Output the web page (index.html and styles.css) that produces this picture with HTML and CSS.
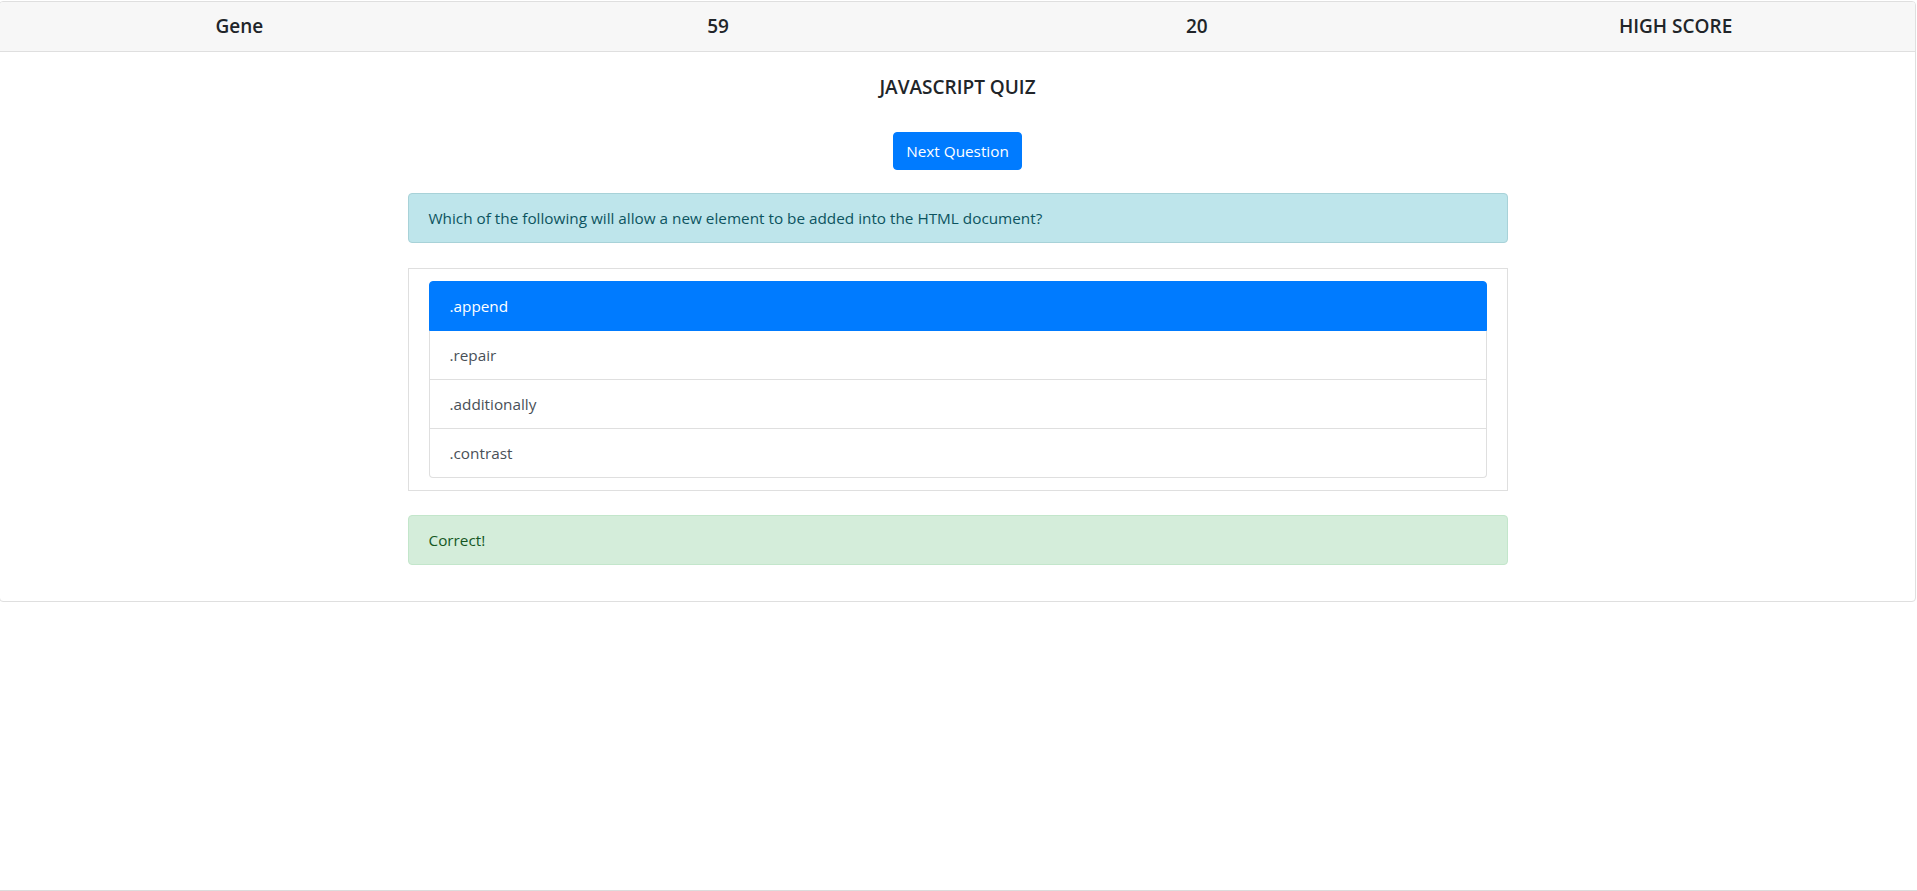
FILE: index.html
```html
<!DOCTYPE html>
<html lang="en">
<head>
<meta charset="utf-8">
<title>JavaScript Quiz</title>
<link rel="stylesheet" href="styles.css">
</head>
<body>
<div class="page">
  <div class="card">
    <div class="card-header">
      <div class="stats">
        <h5 class="stat">Gene</h5>
        <h5 class="stat">59</h5>
        <h5 class="stat">20</h5>
        <h5 class="stat">HIGH SCORE</h5>
      </div>
    </div>
    <div class="card-body">
      <h5 class="title">JAVASCRIPT QUIZ</h5>
      <div class="btn-row"><button class="btn" type="button">Next Question</button></div>
      <div class="quiz">
        <div class="alert alert-info">Which of the following will allow a new element to be added into the HTML document?</div>
        <div class="answers">
          <ul class="list">
            <li class="item active">.append</li>
            <li class="item">.repair</li>
            <li class="item">.additionally</li>
            <li class="item">.contrast</li>
          </ul>
        </div>
        <div class="alert alert-success">Correct!</div>
      </div>
    </div>
  </div>
</div>
</body>
</html>
```
FILE: styles.css
```css
* { box-sizing: border-box; }
html, body { margin: 0; padding: 0; }
body {
  font-family: "Open Sans", "Noto Sans", "Liberation Sans", sans-serif;
  font-size: 16px;
  line-height: 1.5;
  color: #212529;
  background: #fff;
}
.page {
  min-height: 100vh;
  border-bottom: 1px solid #dcdcdc;
  overflow: hidden;
}
.card {
  margin: 1px 1px 0 -1px;
  border: 1px solid #dfdfdf;
  border-radius: 4px;
  background: #fff;
}
.card-header {
  background: #f7f7f7;
  border-bottom: 1px solid #dfdfdf;
  border-radius: 3px 3px 0 0;
  padding: 12px 0 13px;
}
.stats {
  display: grid;
  grid-template-columns: repeat(4, 1fr);
}
.stat {
  margin: 0;
  font-size: 19px;
  font-weight: 600;
  line-height: 24px;
  text-align: center;
  color: #212529;
}
.card-body {
  padding: 20px 20px 36px;
}
.title {
  margin: 0 0 30px;
  font-size: 19px;
  font-weight: 600;
  line-height: 30px;
  text-align: center;
}
.btn-row {
  display: flex;
  justify-content: center;
  margin-bottom: 23px;
}
.btn {
  font-family: inherit;
  font-size: 15.3px;
  line-height: 24px;
  padding: 6px 12px;
  height: 38px;
  color: #fff;
  background: #007bff;
  border: 1px solid #007bff;
  border-radius: 4px;
}
.quiz {
  width: 1100px;
  margin: 0 auto;
}
.alert {
  padding: 12px 20px;
  border: 1px solid transparent;
  border-radius: 4px;
  font-size: 15.3px;
  line-height: 24px;
}
.alert-info {
  background: #bee5eb;
  border-color: #a8d2d8;
  color: #0c5460;
  margin-bottom: 25px;
}
.alert-success {
  background: #d4edda;
  border-color: #c3e6cb;
  color: #155724;
}
.answers {
  border: 1px solid #dfdfdf;
  padding: 12px 20px;
  margin-bottom: 24px;
}
.list {
  list-style: none;
  margin: 0;
  padding: 0;
  border-radius: 4px;
}
.item {
  padding: 12px 20px;
  line-height: 24px;
  font-size: 15.3px;
  color: #495057;
  border: 1px solid #dfdfdf;
  border-top-width: 0;
}
.item:first-child {
  border-top-width: 1px;
  border-radius: 4px 4px 0 0;
}
.item:last-child {
  border-radius: 0 0 4px 4px;
}
.item.active {
  background: #007bff;
  border-color: #007bff;
  color: #fff;
}
```
